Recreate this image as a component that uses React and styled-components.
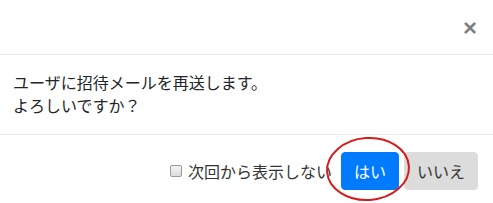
import React from "react";
import styled, { createGlobalStyle } from "styled-components";

const Global = createGlobalStyle`
  html, body { margin: 0; padding: 0; background: #fff; }
  body {
    font-family: "Noto Sans CJK JP", "Liberation Sans", sans-serif;
    color: #212529;
    font-size: 16px;
  }
`;

const Modal = styled.div`
  width: 493px;
  height: 203px;
  overflow: hidden;
  background: #fff;
`;

const Header = styled.div`
  display: flex;
  justify-content: flex-end;
  align-items: center;
  padding: 0 16px 0 0;
  border-bottom: 1px solid #e9ecef;
  box-sizing: border-box;
  height: 55px;
`;

const Close = styled.button`
  border: 0;
  background: transparent;
  padding: 0;
  margin-top: 2px;
  font-family: "Liberation Sans", Arial, sans-serif;
  font-size: 24px;
  font-weight: 700;
  line-height: 1;
  color: #000;
  opacity: 0.5;
  cursor: pointer;
`;

const Body = styled.div`
  padding: 16px 13px 17px;
  border-bottom: 1px solid #e9ecef;
  line-height: 23px;
`;

const Line = styled.p`
  margin: 0;
`;

const Footer = styled.div`
  display: flex;
  justify-content: flex-end;
  align-items: center;
  padding: 17px 15px 0 0;
`;

const Label = styled.label`
  display: flex;
  align-items: center;
  gap: 6px;
  margin-right: 9px;
  font-size: 16px;
  line-height: 24px;
  color: #333;
`;

const Box = styled.span`
  width: 10px;
  height: 10px;
  border: 1px solid #9a9a9a;
  border-radius: 2px;
  background: linear-gradient(#f4f4f4, #dcdcdc);
  box-sizing: content-box;
`;

const BtnWrap = styled.div`
  position: relative;
  display: flex;
`;

const Button = styled.button`
  font-family: "Noto Sans CJK JP", sans-serif;
  font-size: 16px;
  line-height: 24px;
  padding: 6px 12px;
  border: 1px solid ${(p) => (p.$primary ? "#007bff" : "#dcdcdc")};
  background: ${(p) => (p.$primary ? "#007bff" : "#dcdcdc")};
  color: ${(p) => (p.$primary ? "#fff" : "#333")};
  border-radius: 4px;
  margin-left: ${(p) => (p.$gap ? "5px" : "0")};
  cursor: pointer;
`;

const Circle = styled.svg`
  position: absolute;
  left: -15px;
  top: -15px;
  width: 84px;
  height: 64px;
  pointer-events: none;
  overflow: visible;
`;

export default function App() {
  return (
    <>
      <Global />
      <Modal>
        <Header>
          <Close aria-label="Close">×</Close>
        </Header>
        <Body>
          <Line>ユーザに招待メールを再送します。</Line>
          <Line>よろしいですか？</Line>
        </Body>
        <Footer>
          <Label>
            <Box />
            次回から表示しない
          </Label>
          <BtnWrap>
            <Button $primary>はい</Button>
            <Circle viewBox="0 0 84 64">
              <ellipse cx="42" cy="32" rx="41" ry="31" transform="rotate(-4 42 32)" fill="none" stroke="#d41c1c" strokeWidth="2" />
            </Circle>
          </BtnWrap>
          <Button $gap>いいえ</Button>
        </Footer>
      </Modal>
    </>
  );
}
